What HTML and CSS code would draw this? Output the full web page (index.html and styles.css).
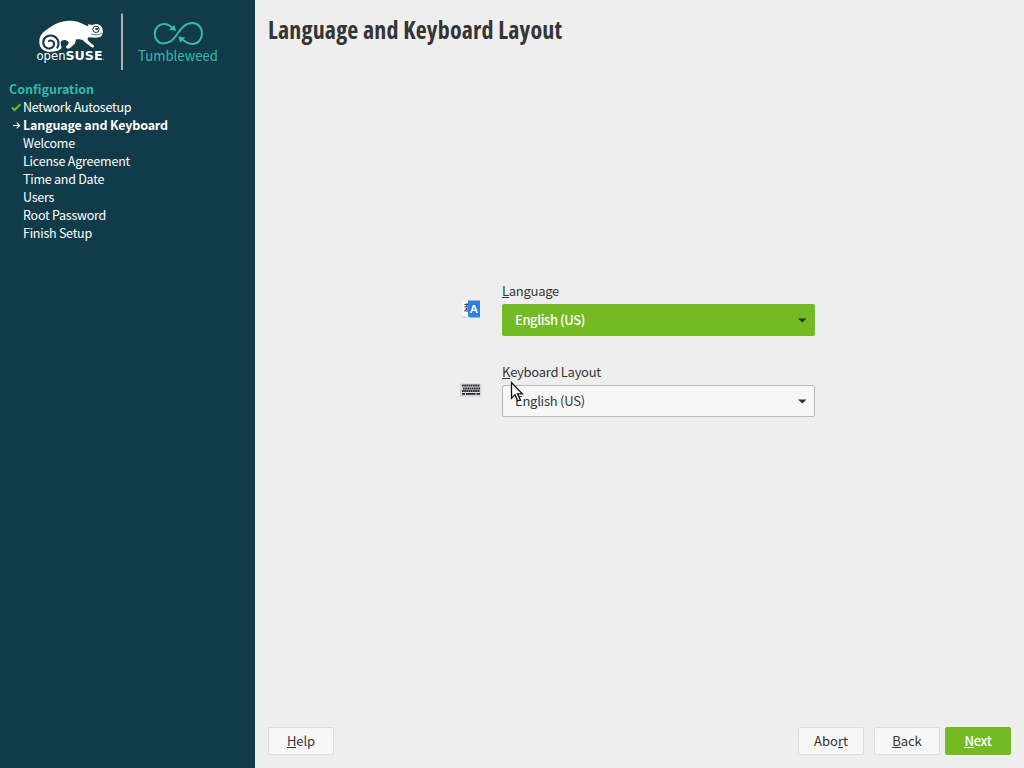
FILE: index.html
```html
<!DOCTYPE html>
<html lang="en">
<head>
<meta charset="utf-8">
<title>Language and Keyboard Layout</title>
<link rel="stylesheet" href="styles.css">
</head>
<body>
<div class="installer">
  <aside class="sidebar">
    <svg class="brand" width="255" height="80" viewBox="0 0 255 80">
      <g transform="translate(30 8) scale(.33333)">
        <path fill="#fff" d="M94 121C89 128 75 132 57 132C38 130 27 117 28 100C28 83 38 72 53 63C72 47 101 34 132 39C148 41 161 49 173 55L175 49L188 51C198 45 211 49 216 58C220 69 220 82 210 87C200 91 187 88 176 88C169 91 175 99 181 104L190 111C195 117 190 120 184 117L163 101C158 94 147 94 139 94C136 98 137 105 133 109L121 119C115 124 107 121 108 116C113 110 120 105 113 100C105 93 95 96 92 102C91 109 96 114 94 121Z"/>
        <path fill="none" stroke="#113b49" stroke-width="6" stroke-linecap="round" d="M82 119C90 105 84 87 68 83C51 79 38 91 40 106C42 121 61 127 70 115C77 104 66 94 57 99"/>
        <path fill="none" stroke="#113b49" stroke-width="2" d="M184 78C195 82 207 82 216 75"/>
        <circle cx="198" cy="64" r="9.500" fill="#fff" stroke="#113b49" stroke-width="3"/>
        <ellipse cx="200" cy="63" rx="5" ry="3" fill="#113b49"/>
      </g>
      <text class="logo-open" x="36.5" y="60" textLength="66" lengthAdjust="spacingAndGlyphs">open<tspan class="logo-suse">SUSE</tspan></text>
      <circle cx="103.6" cy="59.5" r=".5" fill="#b8c4c8"/>
      <path stroke="#a5b2b6" stroke-width="2" d="M122 13.5V70"/>
      <g fill="none" stroke="#35b9ab" stroke-width="2">
        <path d="M171 41.2C168 43 166 43.5 163.500 43.500C158 43.500 154.800 39 154.800 34C154.800 28 159 24 164 24C168 24 170 25.500 172.500 28"/>
        <path d="M171 41.2C178 36 181 23 192.500 23C198 23 202 27.500 202 33.500C202 39.500 198 44 192.500 44C189 44 185.500 42 182.500 39.500"/>
      </g>
      <path fill="#35b9ab" d="M176 31L169 29.800L174.500 25ZM178.300 36.500L185.300 37.400L180 42.700Z"/>
      <text class="logo-tw" x="138" y="61.400" textLength="80" lengthAdjust="spacingAndGlyphs">Tumbleweed</text>
    </svg>
    <h2 class="steps-title">Configuration</h2>
    <ul class="steps">
      <li class="step"><svg class="mark" width="14" height="18" viewBox="0 0 14 18"><path d="M3 9.500L5.600 12L11.300 6.300" fill="none" stroke="#73ba25" stroke-width="2"/></svg>Network Autosetup</li>
      <li class="step current"><svg class="mark" width="14" height="18" viewBox="0 0 14 18"><path d="M4 9.500H10M7.800 6.700L10.600 9.500L7.800 12.300" fill="none" stroke="#fff" stroke-width="1.200"/></svg>Language and Keyboard</li>
      <li class="step">Welcome</li>
      <li class="step license">License Agreement</li>
      <li class="step">Time and Date</li>
      <li class="step">Users</li>
      <li class="step">Root Password</li>
      <li class="step">Finish Setup</li>
    </ul>
  </aside>
  <main class="content">
    <h1 class="title">Language and Keyboard Layout</h1>
    <div class="form">
      <div class="row">
        <svg class="row-icon" width="24" height="24" viewBox="0 0 24 24">
          <rect x="3" y="4" width="9" height="16" fill="#f6f6f6"/><path d="M3 20H10" stroke="#d2cfc8"/>
          <path d="M5.500 7.500H9M5.500 9.800C7 10.500 8 9 8 7.500M8 6V10M5.500 14.500L8 11V15" fill="none" stroke="#444" stroke-width="1.100"/>
          <path d="M9 3.500H20.500L21 4V20L20.500 20.500H11L9 19Z" fill="#2f80df"/>
          <path d="M11 16L14 8H16L19 16H17.200L16.500 14H13.500L12.800 16ZM14 12.500H16L15 9.500Z" fill="#fff" fill-rule="evenodd"/>
        </svg>
        <div class="field">
          <label class="label"><span class="key">L</span>anguage</label>
          <div class="select focused"><span>English (US)</span><svg class="caret" width="9" height="5" viewBox="0 0 9 5"><path d="M0 .5H8.500L4.250 4.500Z"/></svg></div>
        </div>
      </div>
      <div class="row">
        <svg class="row-icon" width="24" height="24" viewBox="0 0 24 24">
          <rect x="1" y="5.500" width="21.500" height="13" rx="1.500" fill="#d2d1ca"/>
          <rect x="2" y="6" width="19.500" height="11" fill="#dededb"/>
          <path d="M3 7.500H21M4 10.500H21M3 12.900H21" stroke="#28212f" stroke-width="2" stroke-dasharray="1.700 .5"/>
          <path d="M3 15.800H6M7 15.800H16.500M17.500 15.800H21" stroke="#28212f" stroke-width="1.700"/>
        </svg>
        <div class="field">
          <label class="label"><span class="key">K</span>eyboard Layout</label>
          <div class="select"><span>English (US)</span><svg class="caret" width="9" height="5" viewBox="0 0 9 5"><path d="M0 .5H8.500L4.250 4.500Z"/></svg></div>
        </div>
      </div>
    </div>
    <footer class="buttons">
      <button class="btn help"><span class="key">H</span>elp</button>
      <button class="btn abort">Abo<span class="key">r</span>t</button>
      <button class="btn back"><span class="key">B</span>ack</button>
      <button class="btn primary"><span class="key">N</span>ext</button>
    </footer>
  </main>
  <svg class="pointer" width="14" height="22" viewBox="0 0 14 22"><path d="M1.500 1.500V17.300L5 13.900L7.800 20L10.300 18.800L7.500 12.900H12.300Z" fill="#fff" stroke="#111" stroke-width="1.300"/></svg>
</div>
</body>
</html>
```
FILE: styles.css
```css
* { box-sizing: border-box; }
body { margin: 0; font: 13px/18px "Noto Sans CJK SC", sans-serif; color: #353535; }
.installer { display: flex; width: 1024px; height: 768px; overflow: hidden; background: #eee; }
.sidebar { width: 255px; background: #113b49; color: #fff; }
.brand { display: block; }
.logo-open { font: 12px "DejaVu Sans", sans-serif; fill: #fff; }
.logo-suse { font-weight: bold; font-size: 13px; }
.logo-tw { font: 14px "Noto Sans CJK SC", sans-serif; fill: #35b9ab; }
.steps-title { margin: 0 0 0 9px; font-size: 12.5px; line-height: 18px; color: #35b9ab; }
.steps { margin: 0; padding: 0 0 0 9px; list-style: none; font-size: 12.5px; letter-spacing: -.25px; }
.step { height: 18px; padding-left: 14px; white-space: nowrap; }
.step .mark { display: block; float: left; margin-left: -14px; }
.current { font-weight: bold; letter-spacing: -.16px; }
.license { letter-spacing: -.2px; }
.content { display: flex; flex-direction: column; flex: 1; padding: 13px; }
.title { margin: 0; font: bold 24px/34px "Open Sans", sans-serif; font-stretch: 75%; letter-spacing: .19px; white-space: nowrap; align-self: flex-start; }
.form { display: flex; flex-direction: column; gap: 31px; width: 356px; margin: 237px 0 0 191px; }
.row { display: flex; align-items: center; justify-content: space-between; height: 50px; }
.row-icon { margin-top: -1px; }
.field { width: 313px; height: 54px; }
.label { display: block; height: 22px; line-height: 18px; letter-spacing: -.28px; }
.key { border-bottom: 1px solid currentColor; display: inline-block; height: 16px; }
.select { display: flex; align-items: center; justify-content: space-between; height: 32px; padding: 0 7px 0 12px; border: 1px solid #b5b8b5; border-radius: 2px; background: #f7f7f7; letter-spacing: -.25px; }
.focused { border-color: #73ba25; background: #73ba25; color: #fff; font-weight: 500; letter-spacing: -.4px; }
.caret { fill: #2f2f2f; }
.buttons { display: flex; align-items: center; margin-top: auto; }
.btn { width: 66px; height: 28px; padding: 0; border: 1px solid #d8dfd8; border-radius: 2px; background: #f7f7f7; color: #353535; font: inherit; }
.help { letter-spacing: -.1px; }
.abort { margin-left: auto; }
.back { margin: 0 5px 0 10px; letter-spacing: -.1px; }
.primary { border-color: #73ba25; background: #73ba25; color: #fff; font-weight: 500; letter-spacing: -.3px; }
.pointer { position: absolute; left: 510px; top: 381px; }
```
